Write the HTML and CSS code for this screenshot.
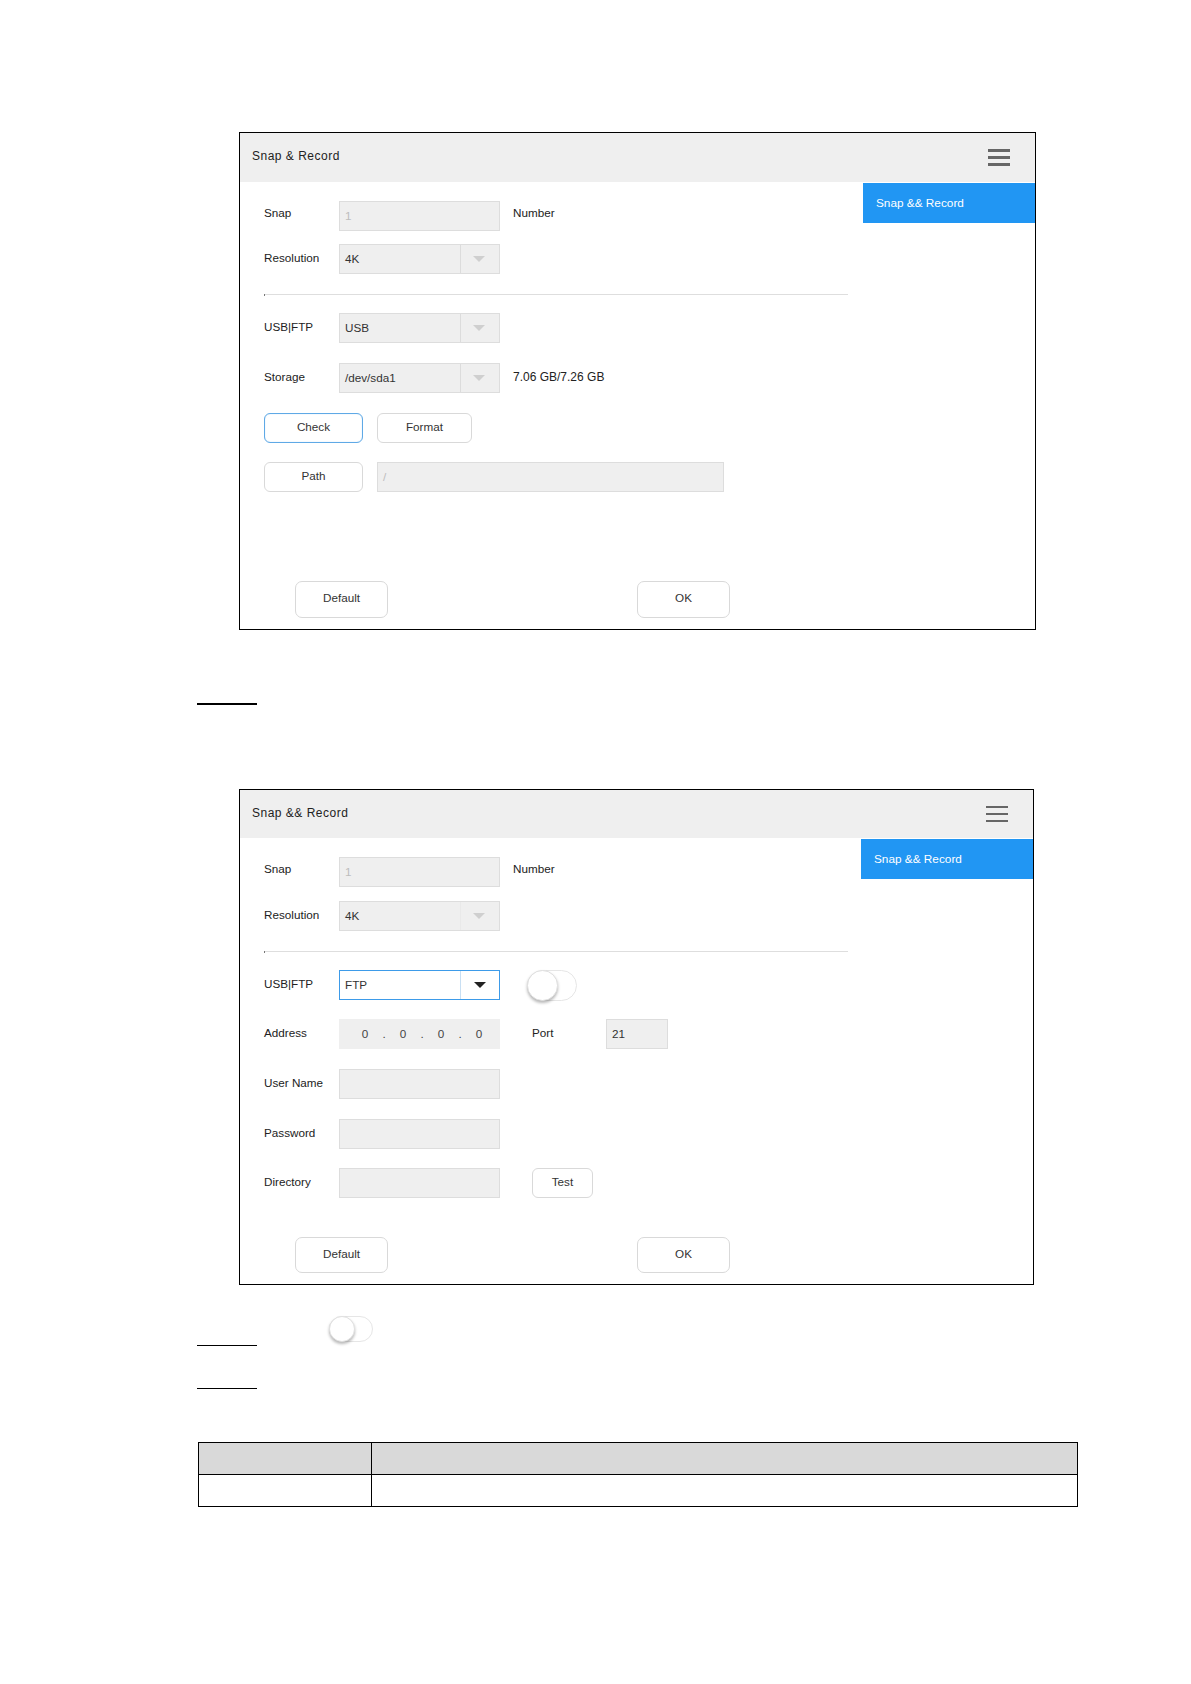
FILE: index.html
```html
<!DOCTYPE html>
<html>
<head>
<meta charset="utf-8">
<link rel="stylesheet" href="styles.css">
</head>
<body>
<div class="page">

  <div class="fig fig1">
    <div class="win-head">
      <span class="win-title">Snap &amp; Record</span>
      <span class="menu-icon"><i></i><i></i><i></i></span>
    </div>
    <div class="win-body">
      <div class="form">
        <div class="row r-first">
          <span class="lbl">Snap</span>
          <span class="field disabled">1</span>
          <span class="after">Number</span>
        </div>
        <div class="row r-tight">
          <span class="lbl">Resolution</span>
          <span class="field select"><span class="val">4K</span><span class="arr"><b class="tri"></b></span></span>
        </div>
        <div class="divider"></div>
        <div class="row r-after-div">
          <span class="lbl">USB|FTP</span>
          <span class="field select"><span class="val">USB</span><span class="arr"><b class="tri"></b></span></span>
        </div>
        <div class="row">
          <span class="lbl">Storage</span>
          <span class="field select"><span class="val">/dev/sda1</span><span class="arr"><b class="tri"></b></span></span>
          <span class="after cap">7.06 GB/7.26 GB</span>
        </div>
        <div class="row">
          <span class="btn btn-check">Check</span>
          <span class="btn btn-format">Format</span>
        </div>
        <div class="row r-path">
          <span class="btn btn-path">Path</span>
          <span class="field path-field disabled">/</span>
        </div>
        <div class="foot foot1">
          <span class="btn btn-big">Default</span>
          <span class="btn btn-big btn-ok">OK</span>
        </div>
      </div>
      <div class="side"><div class="side-item">Snap &amp;&amp; Record</div></div>
    </div>
  </div>

  <div class="mark mark-thick"></div>

  <div class="fig fig2">
    <div class="win-head head2">
      <span class="win-title">Snap &amp;&amp; Record</span>
      <span class="menu-icon"><i></i><i></i><i></i></span>
    </div>
    <div class="win-body">
      <div class="form">
        <div class="row r-first">
          <span class="lbl">Snap</span>
          <span class="field disabled">1</span>
          <span class="after">Number</span>
        </div>
        <div class="row r-tight2">
          <span class="lbl">Resolution</span>
          <span class="field select"><span class="val">4K</span><span class="arr arr-soft"><b class="tri"></b></span></span>
        </div>
        <div class="divider"></div>
        <div class="row r-after-div">
          <span class="lbl">USB|FTP</span>
          <span class="field select active"><span class="val">FTP</span><span class="arr"><b class="tri"></b></span></span>
          <span class="toggle"><span class="knob"></span></span>
        </div>
        <div class="row r-19">
          <span class="lbl">Address</span>
          <span class="field ip"><span class="oct">0</span><span class="dot">.</span><span class="oct">0</span><span class="dot">.</span><span class="oct">0</span><span class="dot">.</span><span class="oct">0</span></span>
          <span class="port-lbl">Port</span>
          <span class="field port">21</span>
        </div>
        <div class="row">
          <span class="lbl">User Name</span>
          <span class="field"></span>
        </div>
        <div class="row">
          <span class="lbl">Password</span>
          <span class="field"></span>
        </div>
        <div class="row r-19">
          <span class="lbl">Directory</span>
          <span class="field"></span>
          <span class="btn btn-test">Test</span>
        </div>
        <div class="foot foot2">
          <span class="btn btn-big">Default</span>
          <span class="btn btn-big btn-ok">OK</span>
        </div>
      </div>
      <div class="side"><div class="side-item">Snap &amp;&amp; Record</div></div>
    </div>
  </div>

  <div class="step-row">
    <div class="mark mark-tall"></div>
    <span class="toggle toggle-small"><span class="knob"></span></span>
  </div>
  <div class="mark mark-thin"></div>

  <table class="doc-table">
    <tr class="th"><td class="c1"></td><td></td></tr>
    <tr><td class="c1"></td><td></td></tr>
  </table>

</div>
</body>
</html>
```

FILE: styles.css
```css
html, body {
  margin: 0;
  background: #fff;
}

body {
  font-family: "Liberation Sans", Arial, sans-serif;
  font-size: 11.7px;
  color: #222;
}

.page {
  padding: 132px 0 120px 197px;
}

.fig {
  margin-left: 42px;
  border: 1px solid #000;
  box-sizing: border-box;
  background: #fff;
}

.fig1 { width: 797px; }
.fig2 { width: 795px; margin-top: 84px; }

.win-head {
  height: 49px;
  background: #efefef;
  display: flex;
  align-items: center;
  justify-content: space-between;
  padding: 0 25px 0 12px;
}

.head2 { height: 48px; }
.head2 .win-title { padding-bottom: 2px; }

.win-title {
  font-size: 12px;
  letter-spacing: 0.5px;
  color: #222;
  padding-bottom: 4px;
}

.menu-icon {
  display: flex;
  flex-direction: column;
  gap: 4.5px;
  width: 22px;
}

.menu-icon i {
  display: block;
  height: 2.6px;
  background: #666;
}

.win-body {
  display: flex;
}

.form {
  flex: 1;
  padding: 19px 0 11px 24px;
}

.side {
  width: 172px;
  padding-top: 1px;
}

.side-item {
  height: 40px;
  background: #2196f3;
  color: #fff;
  display: flex;
  align-items: center;
  padding-left: 13px;
  font-size: 11.8px;
}

.row {
  display: flex;
  align-items: center;
  height: 30px;
  margin-top: 20px;
}

.form > .row:first-child { margin-top: 0; }
.row.r-tight { margin-top: 13px; }
.row.r-tight2 { margin-top: 14px; }
.row.r-after-div { margin-top: 18px; }
.row.r-19 { margin-top: 19px; }
.row.r-path { margin-top: 19px; }

.lbl {
  width: 75px;
  flex: none;
  margin-top: -3px;
  color: #222;
}

.r-first .lbl,
.r-first .after { margin-top: -7px; }

.field {
  width: 161px;
  height: 30px;
  box-sizing: border-box;
  background: #efefef;
  border: 1px solid #dddddd;
  flex: none;
  display: flex;
  align-items: center;
  padding-left: 5px;
  padding-bottom: 2px;
  color: #333;
}

.field.disabled { color: #bdbdbd; }

.select { padding-left: 0; padding-bottom: 0; }

.select .val {
  flex: 1;
  padding-left: 5px;
  padding-bottom: 2px;
}

.select .arr {
  width: 38px;
  height: 100%;
  border-left: 1px solid #dcdcdc;
  display: flex;
  align-items: center;
  justify-content: center;
}

.select .arr-soft { border-left-color: #e9e9e9; }

.tri {
  display: block;
  width: 0;
  height: 0;
  border-left: 6.5px solid transparent;
  border-right: 6.5px solid transparent;
  border-top: 6px solid #cfcfcf;
  margin-left: -3px;
}

.select.active {
  background: #fff;
  border-color: #3d9be9;
}

.select.active .arr { border-left-color: #c8dff3; }
.select.active .tri { border-top-color: #222; margin-left: -1px; }

.after {
  margin-left: 13px;
  margin-top: -3px;
  color: #222;
}

.after.cap { font-size: 12px; }

.divider {
  width: 584px;
  height: 1px;
  background: #dedede;
  margin-top: 20px;
  position: relative;
}

.divider::before {
  content: "";
  position: absolute;
  left: 0;
  top: 0;
  width: 1px;
  height: 2px;
  background: #777;
}

.btn {
  box-sizing: border-box;
  height: 30px;
  border: 1px solid #d9d9d9;
  border-radius: 6px;
  background: #fff;
  display: flex;
  align-items: center;
  justify-content: center;
  padding-bottom: 3px;
  color: #333;
  flex: none;
}

.btn-check {
  width: 99px;
  border-color: #5fa9e6;
  box-shadow: inset 0 0 1px #9fcdf2;
}

.btn-format {
  width: 95px;
  margin-left: 14px;
}

.btn-path { width: 99px; }

.path-field {
  width: 347px;
  margin-left: 14px;
  background: #efefef;
}

.foot {
  display: flex;
  padding-left: 31px;
}

.foot1 { margin-top: 89px; }
.foot2 { margin-top: 39px; }

.btn-big {
  width: 93px;
  height: 37px;
  border-radius: 7px;
  padding-bottom: 4px;
}

.foot2 .btn-big { height: 36px; }

.btn-ok { margin-left: 249px; }

.toggle {
  box-sizing: border-box;
  width: 50px;
  height: 31px;
  border: 1px solid #e6e6e6;
  border-radius: 16px;
  background: #fff;
  margin-left: 27px;
  position: relative;
  flex: none;
}

.toggle .knob {
  position: absolute;
  left: -1px;
  top: -1px;
  width: 29px;
  height: 29px;
  border-radius: 50%;
  background: #fff;
  border: 1px solid #e0e0e0;
  box-shadow: 0 2px 3px rgba(0, 0, 0, 0.28);
}

.ip {
  border-color: #efefef;
  padding-left: 15px;
  color: #444;
}

.oct {
  width: 20px;
  text-align: center;
}

.dot {
  width: 18px;
  text-align: center;
}

.port-lbl {
  margin-left: 32px;
  width: 74px;
  margin-top: -3px;
}

.port {
  width: 62px;
}

.btn-test {
  width: 61px;
  margin-left: 32px;
}

.mark {
  width: 60px;
}

.mark-thick {
  height: 2px;
  background: #000;
  margin-top: 73px;
}

.step-row {
  display: flex;
  margin-top: 31px;
}

.mark-tall {
  height: 30px;
  box-sizing: border-box;
  border-bottom: 1px solid #000;
}

.toggle-small {
  width: 44px;
  height: 26px;
  margin-left: 72px;
  border-radius: 13px;
}

.toggle-small .knob {
  width: 24px;
  height: 24px;
}

.mark-thin {
  height: 1px;
  background: #000;
  margin-top: 42px;
}

.doc-table {
  margin-top: 53px;
  margin-left: 1px;
  width: 880px;
  border-collapse: collapse;
}

.doc-table td {
  border: 1px solid #000;
  height: 31px;
  padding: 0;
}

.doc-table .th td {
  background: #d9d9d9;
}

.doc-table .c1 {
  width: 172px;
}
```
